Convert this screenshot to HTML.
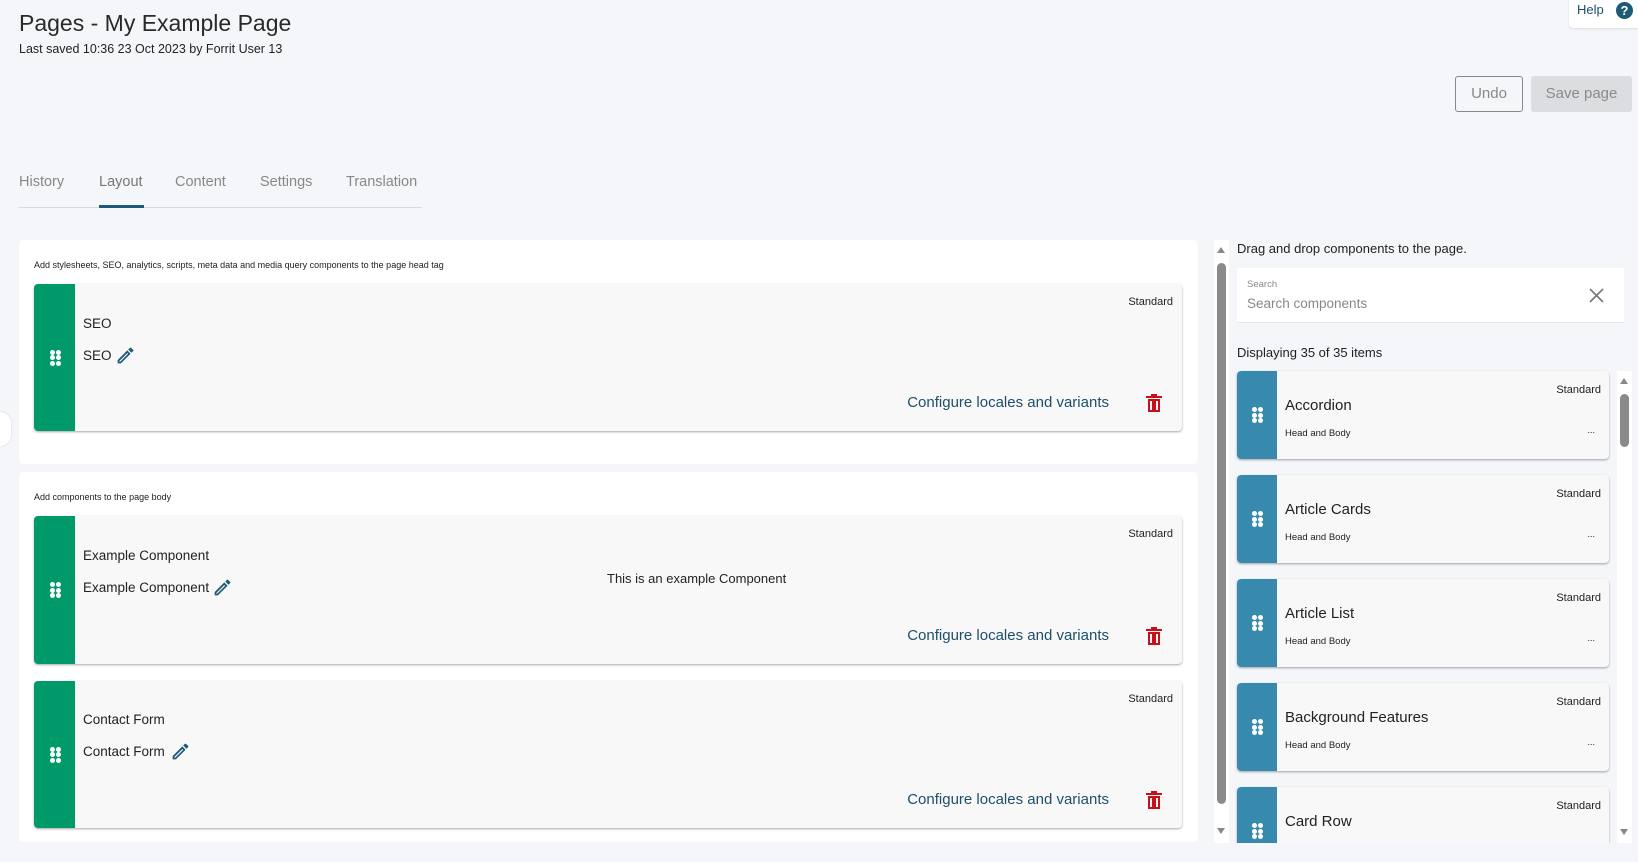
<!DOCTYPE html>
<html><head><meta charset="utf-8"><style>
*{box-sizing:border-box;margin:0;padding:0}
body{width:1638px;height:862px;background:#f4f6fa;font-family:"Liberation Sans",sans-serif;color:#222;position:relative;overflow:hidden}
.a{position:absolute}
.card{position:absolute;left:34px;width:1148px;background:#f8f8f8;border-radius:4px;box-shadow:0 1px 2px rgba(0,0,0,.35)}
.strip{position:absolute;left:0;top:0;bottom:0;width:41px;background:#009a6a;border-radius:4px 0 0 4px}
.dots{position:absolute;left:50%;top:50%;width:11px;height:16px;margin:-8px 0 0 -5px}
.dots i{position:absolute;width:5px;height:5px;border-radius:50%;background:#fff}
.t{font-size:13.5px;color:#222;position:absolute}
.std{position:absolute;right:9px;top:12px;font-size:11px}
.cfg{position:absolute;right:73px;font-size:15px;color:#1d4f6b}
.del{position:absolute;right:20px}
.item{position:absolute;left:1237px;width:372px;height:88px;background:#f8f8f8;border-radius:4px;box-shadow:0 1px 2px rgba(0,0,0,.35);overflow:hidden}
.item .strip{background:#3889ae;width:40px}
.item .nm{position:absolute;left:48px;top:26px;font-size:15px}
.item .hb{position:absolute;left:48px;top:57px;font-size:9.5px}
.item .std{top:13px;right:8px}
.item .el{position:absolute;right:14px;top:54px;font-size:9px}
</style></head><body>
<div class="a" style="left:19px;top:10px;font-size:23px;color:#2a2a2a">Pages - My Example Page</div>
<div class="a" style="left:19px;top:42px;font-size:12.5px">Last saved 10:36 23 Oct 2023 by Forrit User 13</div>
<div class="a" style="left:1569px;top:0;width:69px;height:28px;background:#fff;border-radius:0 0 0 4px;box-shadow:0 1px 2px rgba(0,0,0,.1)"><span class="a" style="left:8px;top:2px;font-size:13px;color:#1d4f6b">Help</span><span class="a" style="left:47px;top:2px;width:17px;height:17px;border-radius:50%;background:#1d5a76;color:#fff;font-size:13px;font-weight:bold;text-align:center;line-height:17px">?</span></div>
<div class="a" style="left:1455px;top:76px;width:68px;height:36px;border:1px solid #888;border-radius:3px;color:#888;font-size:15px;text-align:center;line-height:34px">Undo</div>
<div class="a" style="left:1531px;top:76px;width:101px;height:36px;background:#dcdde0;border-radius:3px;color:#8a8a8a;font-size:15px;text-align:center;line-height:36px">Save page</div>
<div class="a" style="left:19px;top:174px;font-size:14.5px;color:#888">History</div>
<div class="a" style="left:99px;top:174px;font-size:14.5px;color:#777">Layout</div>
<div class="a" style="left:175px;top:174px;font-size:14.5px;color:#888">Content</div>
<div class="a" style="left:260px;top:174px;font-size:14.5px;color:#888">Settings</div>
<div class="a" style="left:346px;top:174px;font-size:14.5px;color:#888">Translation</div>
<div class="a" style="left:19px;top:207px;width:403px;height:1px;background:#d8dade"></div>
<div class="a" style="left:99px;top:205px;width:45px;height:3px;background:#1d5a76"></div>

<div class="a" style="left:19px;top:240px;width:1179px;height:224px;background:#fff;border-radius:4px"></div>
<div class="a" style="left:0;top:412px;width:11px;height:34px;background:#fff;border-radius:0 17px 17px 0;box-shadow:0 0 2px rgba(0,0,0,.15)"></div>
<div class="a" style="left:34px;top:260px;font-size:9px">Add stylesheets, SEO, analytics, scripts, meta data and media query components to the page head tag</div>
<div class="card" style="top:284px;height:147px">
 <div class="strip"><div class="dots"><i style="left:0;top:0"></i><i style="left:6px;top:0"></i><i style="left:0;top:5.5px"></i><i style="left:6px;top:5.5px"></i><i style="left:0;top:11px"></i><i style="left:6px;top:11px"></i></div></div>
 <div class="t" style="left:49px;top:32px">SEO</div>
 <div class="t" style="left:49px;top:64px">SEO</div>
 <svg class="a" style="left:81px;top:61px" width="21" height="21" viewBox="0 0 24 24"><path d="M3 17.25V21h3.75L17.8 9.94l-3.75-3.75L3 17.25zm2.9 1.9H5v-.9l9.06-9.06.9.9L5.92 19.15zM20.7 7.04a1 1 0 0 0 0-1.41l-2.34-2.34a1 1 0 0 0-1.41 0l-1.83 1.83 3.75 3.75 1.83-1.83z" fill="#1d5a76"/></svg>
 <div class="std">Standard</div>
 <div class="cfg" style="top:110px">Configure locales and variants</div>
 <svg class="del" style="top:110px" width="16" height="18" viewBox="0 0 16 18"><path d="M5 0h6v2h5v2H0V2h5z" fill="#c8101a"/><path d="M2 5h12v13H2z" fill="#c8101a"/><path d="M4 7h2v9H4zM10 7h2v9h-2z" fill="#fff"/></svg>
</div>

<div class="a" style="left:19px;top:472px;width:1179px;height:370px;background:#fff;border-radius:4px"></div>
<div class="a" style="left:34px;top:492px;font-size:9px">Add components to the page body</div>
<div class="card" style="top:516px;height:148px">
 <div class="strip"><div class="dots"><i style="left:0;top:0"></i><i style="left:6px;top:0"></i><i style="left:0;top:5.5px"></i><i style="left:6px;top:5.5px"></i><i style="left:0;top:11px"></i><i style="left:6px;top:11px"></i></div></div>
 <div class="t" style="left:49px;top:32px">Example Component</div>
 <div class="t" style="left:49px;top:64px">Example Component</div>
 <svg class="a" style="left:178px;top:61px" width="21" height="21" viewBox="0 0 24 24"><path d="M3 17.25V21h3.75L17.8 9.94l-3.75-3.75L3 17.25zm2.9 1.9H5v-.9l9.06-9.06.9.9L5.92 19.15zM20.7 7.04a1 1 0 0 0 0-1.41l-2.34-2.34a1 1 0 0 0-1.41 0l-1.83 1.83 3.75 3.75 1.83-1.83z" fill="#1d5a76"/></svg>
 <div class="t" style="left:573px;top:55px;font-size:13px">This is an example Component</div>
 <div class="std">Standard</div>
 <div class="cfg" style="top:111px">Configure locales and variants</div>
 <svg class="del" style="top:111px" width="16" height="18" viewBox="0 0 16 18"><path d="M5 0h6v2h5v2H0V2h5z" fill="#c8101a"/><path d="M2 5h12v13H2z" fill="#c8101a"/><path d="M4 7h2v9H4zM10 7h2v9h-2z" fill="#fff"/></svg>
</div>
<div class="card" style="top:681px;height:147px">
 <div class="strip"><div class="dots"><i style="left:0;top:0"></i><i style="left:6px;top:0"></i><i style="left:0;top:5.5px"></i><i style="left:6px;top:5.5px"></i><i style="left:0;top:11px"></i><i style="left:6px;top:11px"></i></div></div>
 <div class="t" style="left:49px;top:31px">Contact Form</div>
 <div class="t" style="left:49px;top:63px">Contact Form</div>
 <svg class="a" style="left:136px;top:60px" width="21" height="21" viewBox="0 0 24 24"><path d="M3 17.25V21h3.75L17.8 9.94l-3.75-3.75L3 17.25zm2.9 1.9H5v-.9l9.06-9.06.9.9L5.92 19.15zM20.7 7.04a1 1 0 0 0 0-1.41l-2.34-2.34a1 1 0 0 0-1.41 0l-1.83 1.83 3.75 3.75 1.83-1.83z" fill="#1d5a76"/></svg>
 <div class="std">Standard</div>
 <div class="cfg" style="top:110px">Configure locales and variants</div>
 <svg class="del" style="top:110px" width="16" height="18" viewBox="0 0 16 18"><path d="M5 0h6v2h5v2H0V2h5z" fill="#c8101a"/><path d="M2 5h12v13H2z" fill="#c8101a"/><path d="M4 7h2v9H4zM10 7h2v9h-2z" fill="#fff"/></svg>
</div>

<div class="a" style="left:1214px;top:240px;width:15px;height:603px;background:#fff"></div>
<div class="a" style="left:1217px;top:247px;width:0;height:0;border-left:4.5px solid transparent;border-right:4.5px solid transparent;border-bottom:6px solid #888"></div>
<div class="a" style="left:1217px;top:263px;width:9px;height:541px;background:#8a8a8a;border-radius:5px"></div>
<div class="a" style="left:1217px;top:828px;width:0;height:0;border-left:4.5px solid transparent;border-right:4.5px solid transparent;border-top:6px solid #888"></div>
<div class="a" style="left:1237px;top:241px;font-size:13px">Drag and drop components to the page.</div>
<div class="a" style="left:1237px;top:268px;width:387px;height:55px;background:#fff;border-bottom:1px solid #e4e6ea">
 <div class="a" style="left:10px;top:11px;font-size:9.5px;color:#888">Search</div>
 <div class="a" style="left:10px;top:28px;font-size:13.5px;color:#888">Search components</div>
 <svg class="a" style="left:352px;top:20px" width="15" height="15" viewBox="0 0 15 15"><path d="M1 1L14 14M14 1L1 14" stroke="#777" stroke-width="1.6"/></svg>
</div>
<div class="a" style="left:1237px;top:345px;font-size:13px">Displaying 35 of 35 items</div>
<div class="a" style="left:1237px;top:365px;width:395px;height:478px;overflow:hidden">
<div class="a" style="left:380px;top:6px;width:15px;height:472px;background:#fff"></div>
<div class="a" style="left:383px;top:13px;border-left:4.5px solid transparent;border-right:4.5px solid transparent;border-bottom:6px solid #888"></div>
<div class="a" style="left:383px;top:29px;width:9px;height:53px;background:#8a8a8a;border-radius:5px"></div>
<div class="a" style="left:383px;top:464px;border-left:4.5px solid transparent;border-right:4.5px solid transparent;border-top:6px solid #888"></div>
</div>
<div class="a" style="left:0;top:0;width:1638px;height:843px;overflow:hidden;pointer-events:none">
<div class="item" style="top:371px"><div class="strip"><div class="dots"><i style="left:0;top:0"></i><i style="left:6px;top:0"></i><i style="left:0;top:5.5px"></i><i style="left:6px;top:5.5px"></i><i style="left:0;top:11px"></i><i style="left:6px;top:11px"></i></div></div><div class="nm">Accordion</div><div class="hb">Head and Body</div><div class="std">Standard</div><div class="el">...</div></div>
<div class="item" style="top:475px"><div class="strip"><div class="dots"><i style="left:0;top:0"></i><i style="left:6px;top:0"></i><i style="left:0;top:5.5px"></i><i style="left:6px;top:5.5px"></i><i style="left:0;top:11px"></i><i style="left:6px;top:11px"></i></div></div><div class="nm">Article Cards</div><div class="hb">Head and Body</div><div class="std">Standard</div><div class="el">...</div></div>
<div class="item" style="top:579px"><div class="strip"><div class="dots"><i style="left:0;top:0"></i><i style="left:6px;top:0"></i><i style="left:0;top:5.5px"></i><i style="left:6px;top:5.5px"></i><i style="left:0;top:11px"></i><i style="left:6px;top:11px"></i></div></div><div class="nm">Article List</div><div class="hb">Head and Body</div><div class="std">Standard</div><div class="el">...</div></div>
<div class="item" style="top:683px"><div class="strip"><div class="dots"><i style="left:0;top:0"></i><i style="left:6px;top:0"></i><i style="left:0;top:5.5px"></i><i style="left:6px;top:5.5px"></i><i style="left:0;top:11px"></i><i style="left:6px;top:11px"></i></div></div><div class="nm">Background Features</div><div class="hb">Head and Body</div><div class="std">Standard</div><div class="el">...</div></div>
<div class="item" style="top:787px"><div class="strip"><div class="dots"><i style="left:0;top:0"></i><i style="left:6px;top:0"></i><i style="left:0;top:5.5px"></i><i style="left:6px;top:5.5px"></i><i style="left:0;top:11px"></i><i style="left:6px;top:11px"></i></div></div><div class="nm">Card Row</div><div class="hb">Head and Body</div><div class="std">Standard</div><div class="el">...</div></div>
</div>
</body></html>
